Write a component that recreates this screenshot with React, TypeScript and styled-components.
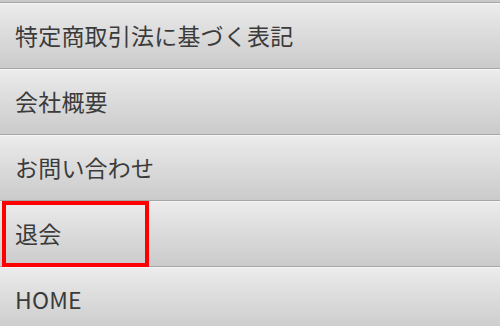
import React from "react";
import styled, { createGlobalStyle } from "styled-components";

const GlobalStyle = createGlobalStyle`
  html, body {
    margin: 0;
    padding: 0;
    background: #d6d6d6;
    overflow: hidden;
  }
`;

const Menu = styled.ul`
  list-style: none;
  margin: 0;
  padding: 0;
  width: 500px;
  height: 326px;
  overflow: hidden;
  font-family: "Noto Sans CJK JP", "Noto Sans", "DejaVu Sans", sans-serif;
`;

const Edge = styled.li`
  height: 2px;
  background: #c9c9c9;
`;

const Row = styled.li<{ $marked?: boolean }>`
  position: relative;
  box-sizing: border-box;
  height: 66px;
  display: flex;
  align-items: center;
  padding: 0 0 2px 15px;
  border-top: 1px solid #a6a6a6;
  box-shadow: inset 0 1px 0 #f6f6f6;
  background: linear-gradient(#ececec, #d9d9d9 55%, #cbcbcb);
  color: #3b3b3b;
  font-size: 23px;
  letter-spacing: 0.2px;
`;

const Mark = styled.span`
  position: absolute;
  top: 0;
  left: 2px;
  width: 147px;
  height: 66px;
  box-sizing: border-box;
  border: 4px solid #ff0000;
  z-index: 1;
`;

const items = ["特定商取引法に基づく表記", "会社概要", "お問い合わせ", "退会", "HOME"];

function App() {
  return (
    <>
      <GlobalStyle />
      <Menu>
        <Edge />
        {items.map((label) => (
          <Row key={label}>
            {label === "退会" && <Mark />}
            {label}
          </Row>
        ))}
      </Menu>
    </>
  );
}

export default App;
